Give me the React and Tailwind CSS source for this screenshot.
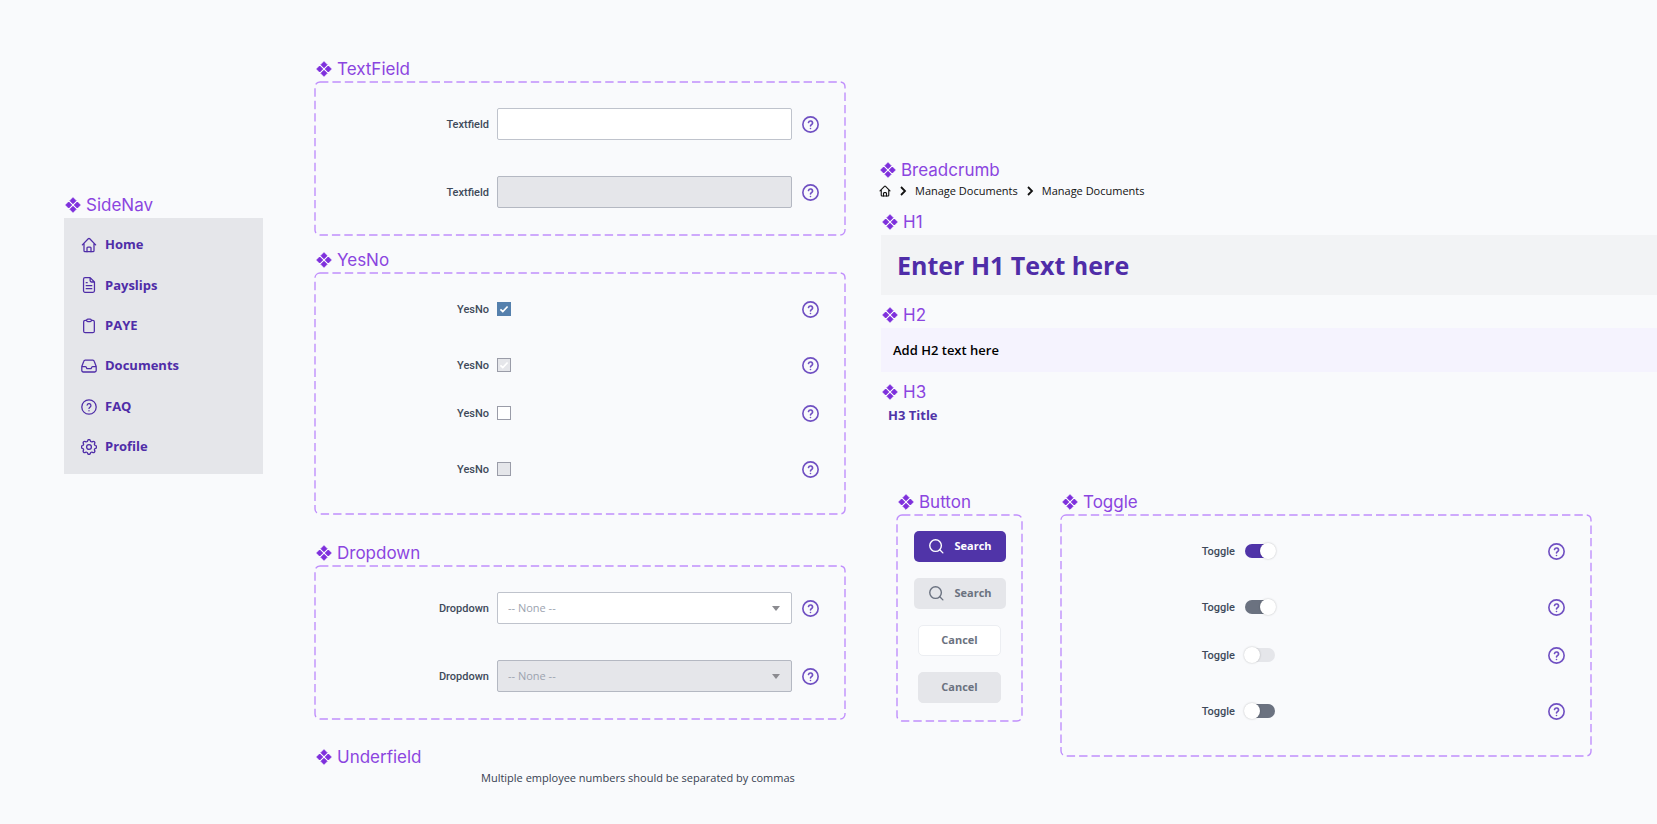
import { useId } from "react";

function ComponentMark() {
  return (
    <svg viewBox="0 0 16 16" className="size-4 shrink-0" fill="#7e2fdc" aria-hidden="true">
      <path d="M8 .7 11 3.7 8 6.7 5 3.7Z M8 9.3 11 12.3 8 15.3 5 12.3Z M3.7 5 6.7 8 3.7 11 .7 8Z M12.3 5 15.3 8 12.3 11 9.3 8Z" stroke="#7e2fdc" strokeWidth=".9" strokeLinejoin="round" />
    </svg>
  );
}

function Title({ children, className = "" }) {
  return (
    <h2 className={`flex h-[26px] items-center gap-[5px] pl-px font-[Inter,sans-serif] text-[17px] leading-6 text-[#8b45e0] ${className}`}>
      <ComponentMark />
      {children}
    </h2>
  );
}

function Panel({ children, className = "" }) {
  return (
    <div className={`relative flex flex-col ${className}`}>
      <svg className="pointer-events-none absolute inset-0 size-full overflow-visible" aria-hidden="true">
        <rect width="100%" height="100%" rx="5" fill="none" stroke="#c08ffc" strokeWidth="1.4" strokeDasharray="8.4 4" />
      </svg>
      {children}
    </div>
  );
}

function QuestionGlyph({ className, strokeWidth }) {
  return (
    <svg viewBox="0 0 24 24" className={className} fill="none" stroke="currentColor" strokeWidth={strokeWidth} strokeLinecap="round" strokeLinejoin="round" aria-hidden="true">
      <circle cx="12" cy="12" r="10.8" />
      <path d="M9.2 9.2a2.9 2.9 0 0 1 5.7.9c0 1.9-2.9 2.4-2.9 4.1M12 17.6v.1" />
    </svg>
  );
}

function Help() {
  return (
    <button type="button" aria-label="Help" className="shrink-0 text-[#7050c2]">
      <QuestionGlyph className="size-[17px]" strokeWidth="2.3" />
    </button>
  );
}

function Row({ label, children, className = "h-5" }) {
  const id = useId();
  return (
    <div className={`flex items-center pr-[26px] ${className}`}>
      <label htmlFor={id} className="mr-2 w-[174px] shrink-0 pt-px text-right font-[Roboto,sans-serif] text-[11px] leading-5 font-medium text-[#3f4a5a]">
        {label}
      </label>
      <div className="mr-[10px] flex min-w-0 flex-1 items-center">{children(id)}</div>
      <Help />
    </div>
  );
}

function TextField({ disabled }) {
  return (
    <Row label="Textfield" className="h-8">
      {(id) => (
        <input id={id} type="text" disabled={disabled} className="h-8 w-full rounded-xs border border-[#bfc3cc] bg-white px-3 text-[11px] disabled:border-[#b4b8c2] disabled:bg-[#e5e6ea]" />
      )}
    </Row>
  );
}

function Dropdown({ disabled }) {
  return (
    <Row label="Dropdown" className="h-8">
      {(id) => (
        <div className="relative w-full">
          <select id={id} disabled={disabled} className="block h-8 w-full appearance-none rounded-xs border border-[#bfc3cc] bg-white px-[10px] text-[11px] text-[#9ca3af] opacity-100 disabled:border-[#b4b8c2] disabled:bg-[#e5e6ea]">
            <option>-- None --</option>
          </select>
          <svg viewBox="0 0 10 6" className="pointer-events-none absolute top-[14px] right-3 h-[5px] w-2" fill="#8b8b90" aria-hidden="true">
            <path d="M0 0h10L5 6z" />
          </svg>
        </div>
      )}
    </Row>
  );
}

function YesNo({ checked, disabled }) {
  return (
    <Row label="YesNo">
      {(id) => (
        <span className="relative flex size-[14px]">
          <input id={id} type="checkbox" defaultChecked={checked} disabled={disabled} className="peer size-[14px] appearance-none border border-[#9a9ca8] bg-white enabled:checked:border-[#5580ad] enabled:checked:bg-[#5580ad] disabled:bg-[#e5e6ea]" />
          <svg viewBox="0 0 14 14" className="pointer-events-none absolute inset-0 hidden size-[14px] peer-checked:block" fill="none" stroke="#ffffff" strokeWidth="1.7" aria-hidden="true">
            <path d="M3.4 7.3 5.8 9.5 10.6 4.5" />
          </svg>
        </span>
      )}
    </Row>
  );
}

function Toggle({ checked, disabled }) {
  return (
    <Row label="Toggle">
      {(id) => (
        <span className="relative ml-px flex h-4 w-8 items-center">
          <input id={id} type="checkbox" role="switch" defaultChecked={checked} disabled={disabled} className="peer mx-px h-[14px] w-full appearance-none rounded-full bg-[#e5e6ea] checked:bg-[#5034a8] disabled:bg-[#6b7280]" />
          <span className="pointer-events-none absolute left-0 size-4 rounded-full bg-white shadow-[0_0_2px_rgba(0,0,0,0.25)] peer-checked:right-0 peer-checked:left-auto" />
        </span>
      )}
    </Row>
  );
}

function HomeIcon({ className, strokeWidth = 1.9 }) {
  return (
    <svg viewBox="0 0 24 24" className={className} fill="none" stroke="currentColor" strokeWidth={strokeWidth} strokeLinecap="round" strokeLinejoin="round" aria-hidden="true">
      <path d="M2 11.8 10.9 2.6a1.5 1.5 0 0 1 2.2 0L22 11.8M4.5 9.5v11a1.5 1.5 0 0 0 1.5 1.5h12a1.5 1.5 0 0 0 1.5-1.5v-11" />
      <path d="M9 22v-5.5a1.3 1.3 0 0 1 1.3-1.3h3.4a1.3 1.3 0 0 1 1.3 1.3V22" />
    </svg>
  );
}

const navPaths = {
  Payslips: "M13.7 1H6a2.2 2.2 0 0 0-2.2 2.2v17.6A2.2 2.2 0 0 0 6 23h12a2.2 2.2 0 0 0 2.2-2.2V7.5zM13.7 1v4.3a2.2 2.2 0 0 0 2.2 2.2h4.3M7.8 8.5h1.5M7.8 13h8.4M7.8 17.5h8.4",
  PAYE: "M8.5 3.5H6.3A2.3 2.3 0 0 0 4 5.8v14A2.3 2.3 0 0 0 6.3 22h11.4a2.3 2.3 0 0 0 2.3-2.2v-14a2.3 2.3 0 0 0-2.3-2.3h-2.2M8.5 3.3c0-1 .8-1.7 1.7-1.7h3.6c.9 0 1.7.7 1.7 1.7v.5c0 1-.8 1.7-1.7 1.7h-3.6c-.9 0-1.7-.7-1.7-1.7z",
  Documents: "M1.2 12.8h5.2a1.5 1.5 0 0 1 1.3.8l.8 1.6a1.5 1.5 0 0 0 1.3.8h4.4a1.5 1.5 0 0 0 1.3-.8l.8-1.6a1.5 1.5 0 0 1 1.3-.8h5.2M1.2 13v5.8A2.2 2.2 0 0 0 3.4 21h17.2a2.2 2.2 0 0 0 2.2-2.2V13a3 3 0 0 0-.1-.7l-2.9-7.4A2.2 2.2 0 0 0 17.7 3.3H6.3a2.2 2.2 0 0 0-2.1 1.6L1.3 12.3a3 3 0 0 0-.1.7z",
};

function GearIcon() {
  return (
    <svg viewBox="1 1.5 22 22" className="size-4" fill="none" stroke="currentColor" strokeWidth="1.8" strokeLinejoin="round" aria-hidden="true">
      <path d="M10.1 3.9c.5-2.2 3.3-2.2 3.8 0a2 2 0 0 0 3 1.2c1.9-1.2 3.9.8 2.8 2.7a2 2 0 0 0 1.2 2.9c2.2.5 2.2 3.1 0 3.6a2 2 0 0 0-1.2 2.9c1.1 1.9-.9 3.9-2.8 2.7a2 2 0 0 0-3 1.2c-.5 2.2-3.3 2.2-3.8 0a2 2 0 0 0-3-1.2c-1.9 1.2-3.9-.8-2.8-2.7a2 2 0 0 0-1.2-2.9c-2.2-.5-2.2-3.1 0-3.6a2 2 0 0 0 1.2-2.9C3.2 5.9 5.2 3.9 7.1 5.1a2 2 0 0 0 3-1.2z" />
      <circle cx="12" cy="12.5" r="3.3" />
    </svg>
  );
}

function NavIcon({ name }) {
  if (name === "Home") return <HomeIcon className="size-4" />;
  if (name === "FAQ") return <QuestionGlyph className="size-4" strokeWidth="1.9" />;
  if (name === "Profile") return <GearIcon />;
  return (
    <svg viewBox="0 0 24 24" className="size-4" fill="none" stroke="currentColor" strokeWidth="1.9" strokeLinecap="round" strokeLinejoin="round" aria-hidden="true">
      <path d={navPaths[name]} />
    </svg>
  );
}

function SideNav() {
  return (
    <nav aria-label="SideNav" className="flex h-64 flex-col justify-between bg-[#e5e6ea] py-[15px] pl-[17px]">
      {["Home", "Payslips", "PAYE", "Documents", "FAQ", "Profile"].map((name) => (
        <a key={name} href="#" className="flex h-6 items-center gap-2 text-[13px] font-bold text-[#4f2da8]">
          <NavIcon name={name} />
          {name}
        </a>
      ))}
    </nav>
  );
}

function Chevron() {
  return (
    <svg viewBox="0 0 8 10" className="h-[10px] w-2" fill="none" stroke="currentColor" strokeWidth="1.8" aria-hidden="true">
      <path d="M2 1 6 5 2 9" />
    </svg>
  );
}

function SearchButton({ disabled }) {
  return (
    <button type="button" disabled={disabled} className="flex h-[31px] w-[92px] items-center gap-[11px] rounded-[5px] bg-[#5034a8] pl-[15px] text-[11px] font-bold text-white disabled:bg-[#e5e6ea] disabled:text-[#6b7280]">
      <svg viewBox="0 0 16 16" className="size-[15px]" fill="none" stroke="currentColor" strokeWidth="1.5" strokeLinecap="round" aria-hidden="true">
        <circle cx="7" cy="7" r="6.2" />
        <path d="m11.5 11.5 3.3 3.3" />
      </svg>
      Search
    </button>
  );
}

function CancelButton({ disabled }) {
  return (
    <button type="button" disabled={disabled} className="h-[31px] w-[83px] rounded-[5px] border border-[#eceef2] bg-white text-[11px] font-bold text-[#6b7280] disabled:border-[#e5e6ea] disabled:bg-[#e5e6ea]">
      Cancel
    </button>
  );
}

function BinaryRows({ control: Control }) {
  return (
    <Panel className="pt-[26px] pb-[35px]">
      <Control checked />
      <div className="h-9" />
      <Control checked disabled />
      <div className="h-7" />
      <Control />
      <div className="h-9" />
      <Control disabled />
    </Panel>
  );
}

export default function App() {
  return (
    <main className="grid min-h-screen grid-cols-[199px_minmax(0,582fr)_minmax(0,812fr)] bg-[#f9fafc] pl-16 font-['Open_Sans',sans-serif]">
      <section className="pt-48">
        <Title>SideNav</Title>
        <SideNav />
      </section>

      <section className="ml-[52px] pt-14">
        <Title>TextField</Title>
        <Panel className="gap-9 pt-[26px] pb-[27px]">
          <TextField />
          <TextField disabled />
        </Panel>
        <Title className="mt-3">YesNo</Title>
        <BinaryRows control={YesNo} />
        <Title className="mt-[26px]">Dropdown</Title>
        <Panel className="gap-9 pt-[26px] pb-[27px]">
          <Dropdown />
          <Dropdown disabled />
        </Panel>
        <Title className="mt-[25px]">Underfield</Title>
        <p className="pl-[166px] text-[11px] leading-4 text-[#374151]">Multiple employee numbers should be separated by commas</p>
      </section>

      <section className="ml-[34px] pt-[157px]">
        <Title>Breadcrumb</Title>
        <nav aria-label="Breadcrumb" className="flex h-4 items-center gap-2 text-[11px] text-[#111111]">
          <a href="#" aria-label="Home">
            <HomeIcon className="size-3" strokeWidth={2.2} />
          </a>
          <Chevron />
          <a href="#">Manage Documents</a>
          <Chevron />
          <a href="#">Manage Documents</a>
        </nav>
        <Title className="mt-[10px] ml-[2px]">H1</Title>
        <h1 className="ml-[2px] h-[60px] bg-[#f2f3f5] pl-4 text-[25px] leading-[60px] font-bold text-[#4f2da8]">Enter H1 Text here</h1>
        <Title className="mt-[7px] ml-[2px]">H2</Title>
        <h2 className="ml-[2px] h-11 bg-[#f5f3fe] pl-3 text-[13px] leading-11 font-semibold text-black">Add H2 text here</h2>
        <Title className="mt-[7px] ml-[2px]">H3</Title>
        <h3 className="pl-[9px] text-[13px] leading-5 font-bold text-[#5034a8]">H3 Title</h3>
        <div className="mt-16 mr-[66px] ml-[18px] flex items-start gap-[39px]">
          <div className="w-[125px] shrink-0">
            <Title>Button</Title>
            <Panel className="items-center gap-4 pt-4 pb-[18px]">
              <SearchButton />
              <SearchButton disabled />
              <CancelButton />
              <CancelButton disabled />
            </Panel>
          </div>
          <div className="min-w-0 flex-1">
            <Title>Toggle</Title>
            <BinaryRows control={Toggle} />
          </div>
        </div>
      </section>
    </main>
  );
}
